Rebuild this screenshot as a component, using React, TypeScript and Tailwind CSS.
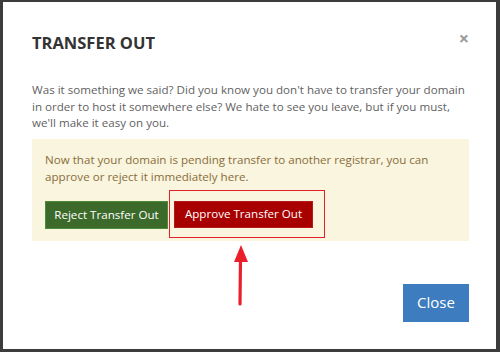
import React from "react";

export default function App() {
  return (
    <div
      className="w-[500px] h-[352px] bg-[#3c3c3c] pl-[3px] pt-[2px] pr-[4px] pb-[3px]"
      style={{ fontFamily: '"Open Sans", "Liberation Sans", sans-serif' }}
    >
      <div className="relative h-full bg-white flex flex-col pl-[29px] pr-[27px]">
        <div className="flex justify-between items-start pt-[31px]">
          <h1 className="text-[16.5px] leading-[20px] font-bold text-[#333333]">TRANSFER OUT</h1>
          <span className="text-[18px] leading-[20px] font-bold text-[#9a9a9a] mr-0 mt-[-5px]">×</span>
        </div>
        <p className="mt-[29px] text-[11.6px] leading-[16.5px] text-[#5f5f5f]">
          Was it something we said? Did you know you don't have to transfer your domain in order to host it somewhere else? We hate to see you leave, but if you must, we'll make it easy on you.
        </p>
        <div className="mt-[7px] bg-[#f9f5df] px-[13px] pt-[12px] pb-[12px]">
          <p className="text-[11.6px] leading-[17px] text-[#8a6d3b]">
            Now that your domain is pending transfer to another registrar, you can approve or reject it immediately here.
          </p>
          <div className="flex gap-[6px] mt-[16px]">
            <button className="h-[28px] w-[123px] bg-[#3b6a2a] border border-[#4d8a3a] text-white text-[11.6px]">
              Reject Transfer Out
            </button>
            <button className="h-[27px] w-[139px] bg-[#a80000] border border-[#b41a1a] text-white text-[11.6px]">
              Approve Transfer Out
            </button>
          </div>
        </div>
        <div className="flex justify-end mt-[43px]">
          <button className="h-[38px] w-[66px] bg-[#3d7cbe] text-white text-[15px]">Close</button>
        </div>
        <div className="absolute left-[166px] top-[188px] w-[156px] h-[48px] border-[1.5px] border-[#e3202a]" />
        <svg className="absolute left-[227px] top-[240px]" width="20" height="66" viewBox="0 0 20 66">
          <path d="M10.5 16 L10 62" stroke="#ea1f2c" strokeWidth="3.2" strokeLinecap="round" fill="none" />
          <path d="M11 3 L4 20 L18 20 Z" fill="#ea1f2c" />
        </svg>
      </div>
    </div>
  );
}
